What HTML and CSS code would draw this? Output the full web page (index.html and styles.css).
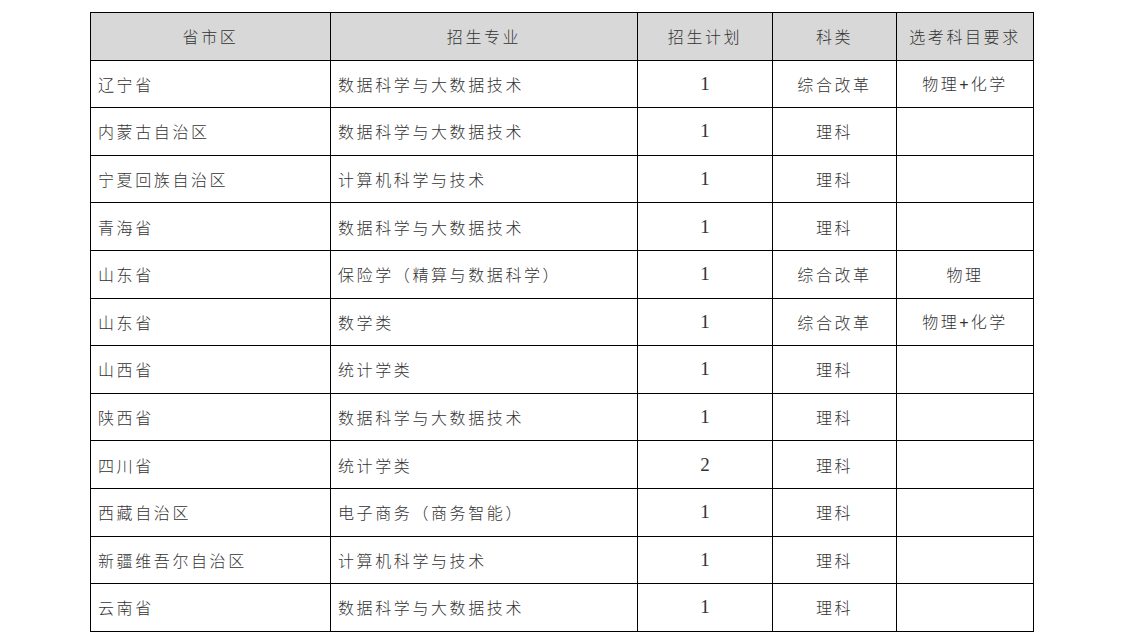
FILE: index.html
```html
<!DOCTYPE html>
<html lang="zh-CN">
<head>
<meta charset="utf-8">
<title>招生计划</title>
<link rel="stylesheet" href="styles.css">
</head>
<body>
<div class="page">
<table class="plan">
<colgroup>
<col class="c1"><col class="c2"><col class="c3"><col class="c4"><col class="c5">
</colgroup>
<thead>
<tr><th>省市区</th><th>招生专业</th><th>招生计划</th><th>科类</th><th>选考科目要求</th></tr>
</thead>
<tbody>
<tr><td class="l">辽宁省</td><td class="l">数据科学与大数据技术</td><td class="n">1</td><td>综合改革</td><td>物理<span class="plus">+</span>化学</td></tr>
<tr><td class="l">内蒙古自治区</td><td class="l">数据科学与大数据技术</td><td class="n">1</td><td>理科</td><td></td></tr>
<tr><td class="l">宁夏回族自治区</td><td class="l">计算机科学与技术</td><td class="n">1</td><td>理科</td><td></td></tr>
<tr><td class="l">青海省</td><td class="l">数据科学与大数据技术</td><td class="n">1</td><td>理科</td><td></td></tr>
<tr><td class="l">山东省</td><td class="l">保险学（精算与数据科学）</td><td class="n">1</td><td>综合改革</td><td>物理</td></tr>
<tr><td class="l">山东省</td><td class="l">数学类</td><td class="n">1</td><td>综合改革</td><td>物理<span class="plus">+</span>化学</td></tr>
<tr><td class="l">山西省</td><td class="l">统计学类</td><td class="n">1</td><td>理科</td><td></td></tr>
<tr><td class="l">陕西省</td><td class="l">数据科学与大数据技术</td><td class="n">1</td><td>理科</td><td></td></tr>
<tr><td class="l">四川省</td><td class="l">统计学类</td><td class="n">2</td><td>理科</td><td></td></tr>
<tr><td class="l">西藏自治区</td><td class="l">电子商务（商务智能）</td><td class="n">1</td><td>理科</td><td></td></tr>
<tr><td class="l">新疆维吾尔自治区</td><td class="l">计算机科学与技术</td><td class="n">1</td><td>理科</td><td></td></tr>
<tr><td class="l">云南省</td><td class="l">数据科学与大数据技术</td><td class="n">1</td><td>理科</td><td></td></tr>
</tbody>
</table>
</div>
</body>
</html>
```
FILE: styles.css
```css
html, body {
  margin: 0;
  padding: 0;
  background: #ffffff;
}
.page {
  padding: 12px 0 0 90px;
}
.plan {
  border-collapse: collapse;
  table-layout: fixed;
  width: 943px;
  font-family: "Noto Sans CJK SC", "Liberation Serif", serif;
  font-size: 16px;
  font-weight: 300;
  color: #333333;
}
.c1 { width: 240px; }
.c2 { width: 307px; }
.c3 { width: 135px; }
.c4 { width: 124px; }
.c5 { width: 137px; }
.plan tr {
  height: 47.6px;
}
.plan th, .plan td {
  border: 1px solid #000;
  padding: 0 4px;
  text-align: center;
  vertical-align: middle;
  font-weight: 300;
  letter-spacing: 2.6px;
  white-space: nowrap;
  line-height: 20px;
}
.plan th {
  background: #d8d8d8;
}
.plan td.l {
  text-align: left;
  padding-left: 7px;
}
.plan td.n {
  font-family: "Liberation Serif", serif;
  font-size: 19px;
  letter-spacing: 0;
}
.plus {
  font-family: "Liberation Sans", sans-serif;
  letter-spacing: 0;
  margin-right: 2px;
}
```
